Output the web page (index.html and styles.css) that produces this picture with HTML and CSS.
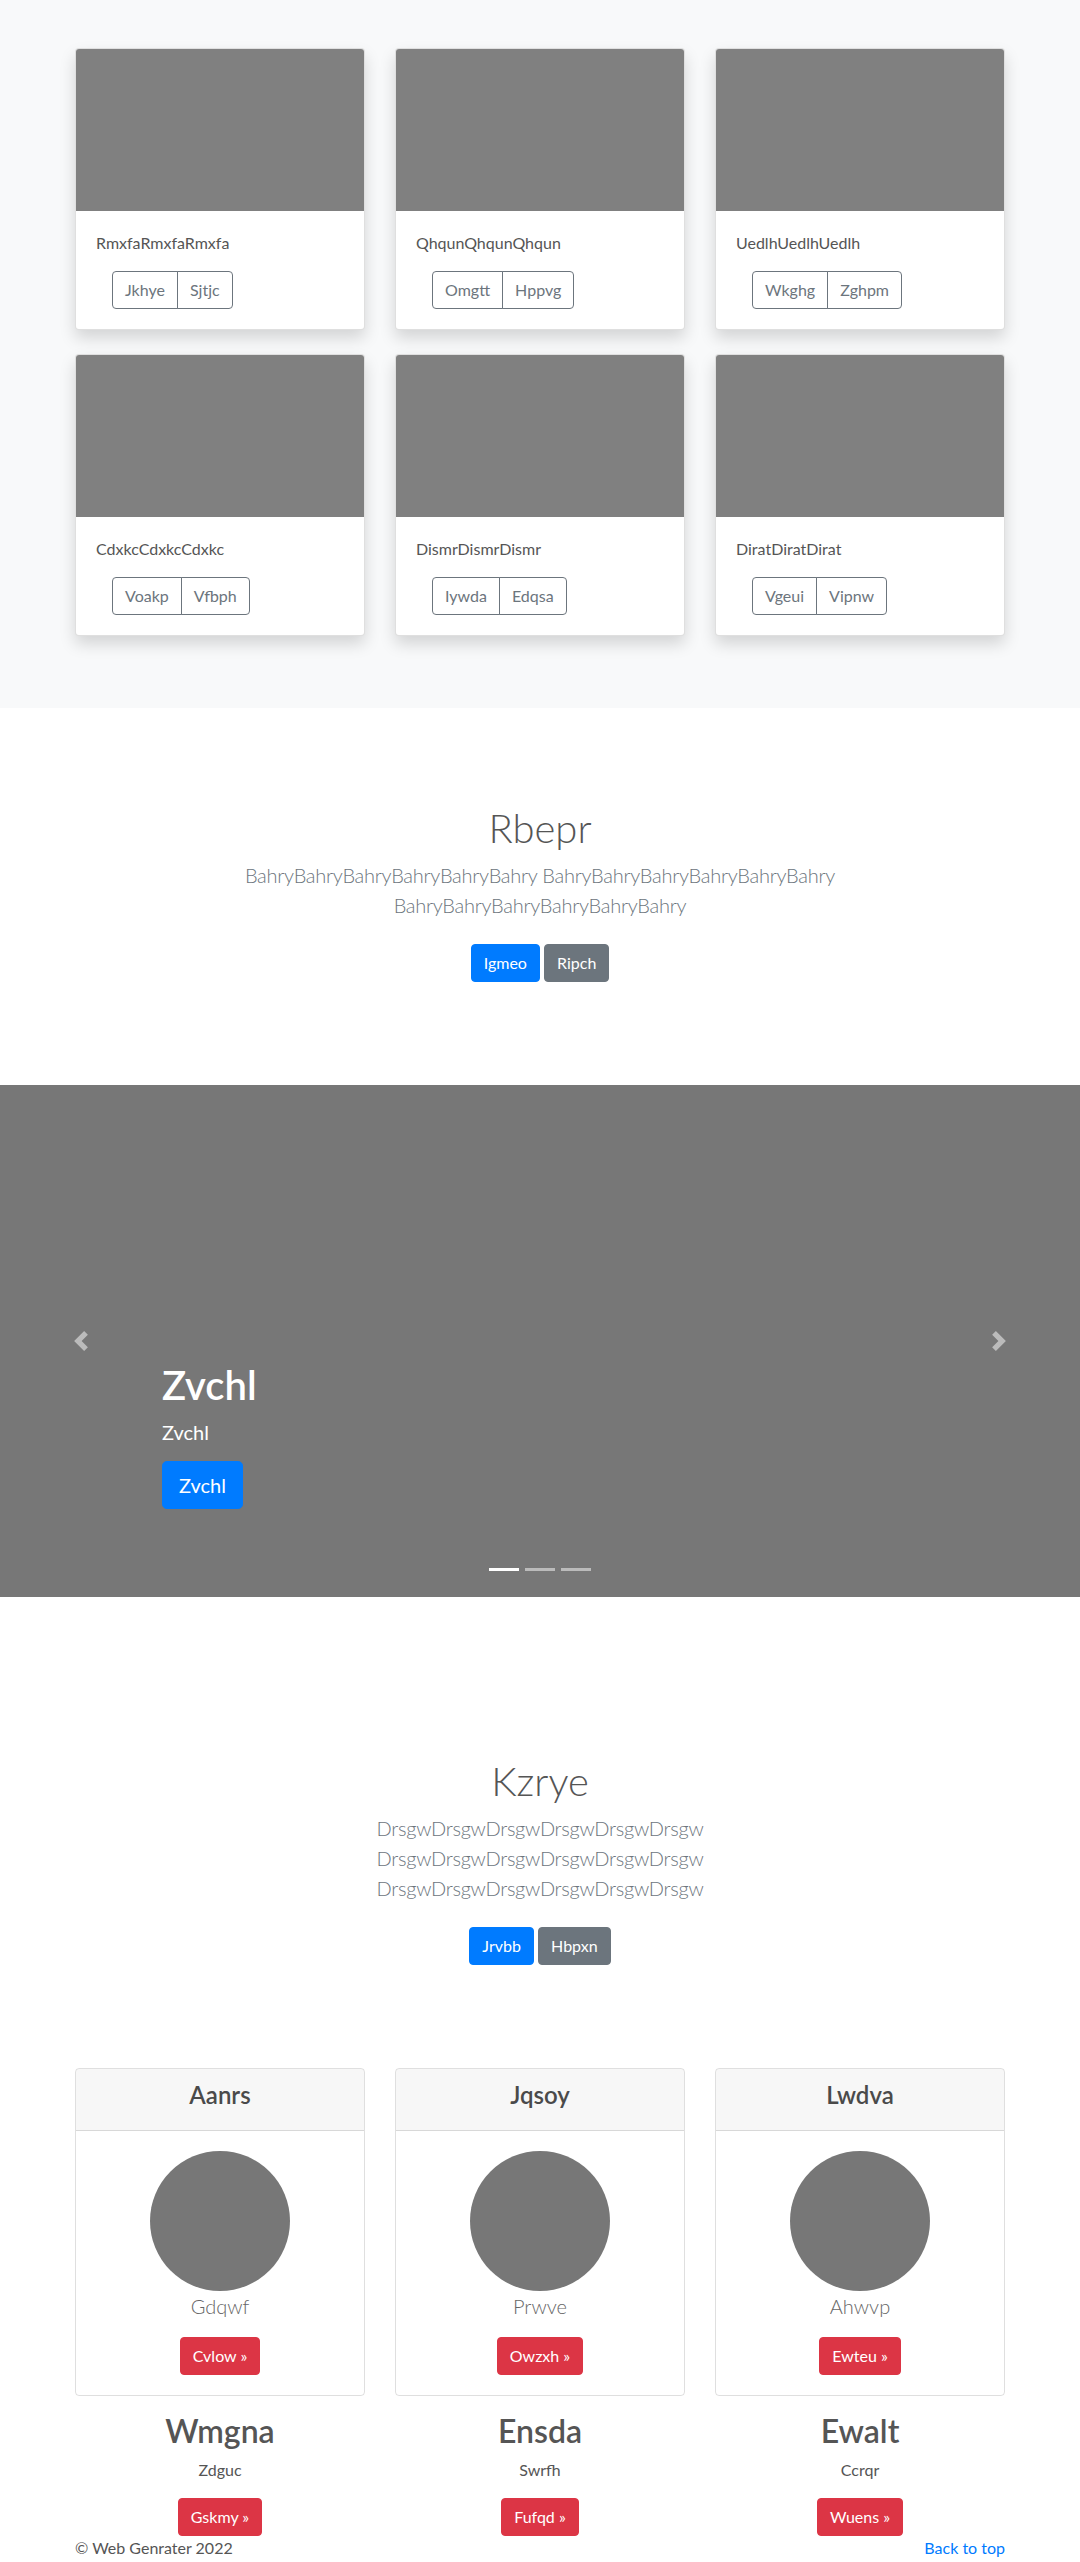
FILE: index.html
```html
<!DOCTYPE html>
<html lang="en">
<head>
<meta charset="utf-8">
<title>Album</title>
<link rel="stylesheet" href="styles.css">
</head>
<body>
<main>
  <section class="album">
    <div class="container">
      <div class="album-grid">
        <div class="card shadow">
          <div class="card-img"></div>
          <div class="card-body">
            <p class="card-text">RmxfaRmxfaRmxfa</p>
            <div class="btn-group"><a class="btn btn-outline">Jkhye</a><a class="btn btn-outline">Sjtjc</a></div>
          </div>
        </div>
        <div class="card shadow">
          <div class="card-img"></div>
          <div class="card-body">
            <p class="card-text">QhqunQhqunQhqun</p>
            <div class="btn-group"><a class="btn btn-outline">Omgtt</a><a class="btn btn-outline">Hppvg</a></div>
          </div>
        </div>
        <div class="card shadow">
          <div class="card-img"></div>
          <div class="card-body">
            <p class="card-text">UedlhUedlhUedlh</p>
            <div class="btn-group"><a class="btn btn-outline">Wkghg</a><a class="btn btn-outline">Zghpm</a></div>
          </div>
        </div>
        <div class="card shadow">
          <div class="card-img"></div>
          <div class="card-body">
            <p class="card-text">CdxkcCdxkcCdxkc</p>
            <div class="btn-group"><a class="btn btn-outline">Voakp</a><a class="btn btn-outline">Vfbph</a></div>
          </div>
        </div>
        <div class="card shadow">
          <div class="card-img"></div>
          <div class="card-body">
            <p class="card-text">DismrDismrDismr</p>
            <div class="btn-group"><a class="btn btn-outline">Iywda</a><a class="btn btn-outline">Edqsa</a></div>
          </div>
        </div>
        <div class="card shadow">
          <div class="card-img"></div>
          <div class="card-body">
            <p class="card-text">DiratDiratDirat</p>
            <div class="btn-group"><a class="btn btn-outline">Vgeui</a><a class="btn btn-outline">Vipnw</a></div>
          </div>
        </div>
      </div>
    </div>
  </section>

  <section class="jumbotron">
    <div class="narrow">
      <h1 class="jumbo-heading">Rbepr</h1>
      <p class="lead muted">BahryBahryBahryBahryBahryBahry BahryBahryBahryBahryBahryBahry BahryBahryBahryBahryBahryBahry</p>
      <p class="actions">
        <a class="btn btn-primary btn-spaced">Igmeo</a>
        <a class="btn btn-secondary btn-spaced">Ripch</a>
      </p>
    </div>
  </section>

  <div class="carousel">
    <ol class="indicators">
      <li class="active"></li>
      <li></li>
      <li></li>
    </ol>
    <div class="carousel-item">
      <div class="caption">
        <h1 class="caption-title">Zvchl</h1>
        <p class="caption-text">Zvchl</p>
        <p class="caption-actions"><a class="btn btn-lg btn-primary">Zvchl</a></p>
      </div>
    </div>
    <a class="control control-prev">
      <svg class="control-icon" viewBox="0 0 8 8" width="20" height="20"><path fill="#fff" d="M5.25 0l-4 4 4 4 1.5-1.5-2.5-2.5 2.5-2.5-1.5-1.5z"/></svg>
    </a>
    <a class="control control-next">
      <svg class="control-icon" viewBox="0 0 8 8" width="20" height="20"><path fill="#fff" d="M2.75 0l-1.5 1.5 2.5 2.5-2.5 2.5 1.5 1.5 4-4-4-4z"/></svg>
    </a>
  </div>

  <section class="jumbotron">
    <div class="narrow">
      <h1 class="jumbo-heading">Kzrye</h1>
      <p class="lead muted">DrsgwDrsgwDrsgwDrsgwDrsgwDrsgw DrsgwDrsgwDrsgwDrsgwDrsgwDrsgw DrsgwDrsgwDrsgwDrsgwDrsgwDrsgw</p>
      <p class="actions">
        <a class="btn btn-primary btn-spaced">Jrvbb</a>
        <a class="btn btn-secondary btn-spaced">Hbpxn</a>
      </p>
    </div>
  </section>

  <div class="container">
    <div class="deck">
      <div class="price-card">
        <div class="price-header"><h4 class="price-title">Aanrs</h4></div>
        <div class="price-body">
          <svg class="avatar" width="140" height="140" viewBox="0 0 140 140"><circle cx="70" cy="70" r="70" fill="#777"/></svg>
          <p class="price-name">Gdqwf</p>
          <a class="btn btn-danger">Cvlow &raquo;</a>
        </div>
      </div>
      <div class="price-card">
        <div class="price-header"><h4 class="price-title">Jqsoy</h4></div>
        <div class="price-body">
          <svg class="avatar" width="140" height="140" viewBox="0 0 140 140"><circle cx="70" cy="70" r="70" fill="#777"/></svg>
          <p class="price-name">Prwve</p>
          <a class="btn btn-danger">Owzxh &raquo;</a>
        </div>
      </div>
      <div class="price-card">
        <div class="price-header"><h4 class="price-title">Lwdva</h4></div>
        <div class="price-body">
          <svg class="avatar" width="140" height="140" viewBox="0 0 140 140"><circle cx="70" cy="70" r="70" fill="#777"/></svg>
          <p class="price-name">Ahwvp</p>
          <a class="btn btn-danger">Ewteu &raquo;</a>
        </div>
      </div>
    </div>

    <div class="marketing">
      <div class="feature">
        <h2 class="feature-title">Wmgna</h2>
        <p class="feature-text">Zdguc</p>
        <p class="feature-action"><a class="btn btn-danger">Gskmy &raquo;</a></p>
      </div>
      <div class="feature">
        <h2 class="feature-title">Ensda</h2>
        <p class="feature-text">Swrfh</p>
        <p class="feature-action"><a class="btn btn-danger">Fufqd &raquo;</a></p>
      </div>
      <div class="feature">
        <h2 class="feature-title">Ewalt</h2>
        <p class="feature-text">Ccrqr</p>
        <p class="feature-action"><a class="btn btn-danger">Wuens &raquo;</a></p>
      </div>
    </div>
  </div>
</main>

<footer class="container footer">
  <p class="back-top"><a class="link">Back to top</a></p>
  <p class="copyright">&copy; Web Genrater 2022</p>
</footer>
</body>
</html>
```

FILE: styles.css
```css
* { box-sizing: border-box; }

html, body {
  margin: 0;
  padding: 0;
}

body {
  font-family: Lato, "Open Sans", "Noto Sans", sans-serif;
  font-size: 16px;
  line-height: 1.5;
  color: #555;
  background: #fff;
}

p { margin: 0 0 16px; }
h1, h2, h4 { margin: 0 0 8px; line-height: 1.2; font-weight: 500; }

.container {
  width: 960px;
  margin: 0 auto;
  padding: 0 15px;
}

/* ---------- buttons ---------- */
.btn {
  display: inline-block;
  font-size: 16px;
  line-height: 24px;
  padding: 6px 12px;
  border: 1px solid transparent;
  border-radius: 4px;
  text-decoration: none;
  text-align: center;
  vertical-align: middle;
  cursor: pointer;
}
.btn-primary { background: #007bff; border-color: #007bff; color: #fff; }
.btn-secondary { background: #6c757d; border-color: #6c757d; color: #fff; }
.btn-danger { background: #dc3545; border-color: #dc3545; color: #fff; }
.btn-outline { background: transparent; border-color: #6c757d; color: #6c757d; }
.btn-lg {
  font-size: 20px;
  line-height: 30px;
  padding: 8px 16px;
  border-radius: 4.8px;
}
.btn-spaced { margin: 8px 0; }

.btn-group {
  display: inline-flex;
  margin-left: 16px;
}
.btn-group .btn:first-child { border-top-right-radius: 0; border-bottom-right-radius: 0; }
.btn-group .btn:last-child { border-top-left-radius: 0; border-bottom-left-radius: 0; margin-left: -1px; }

/* ---------- album ---------- */
.album {
  background: #f8f9fa;
  padding: 48px 0;
}
.album-grid {
  display: grid;
  grid-template-columns: repeat(3, 290px);
  column-gap: 30px;
}
.card {
  background: #fff;
  border: 1px solid rgba(0, 0, 0, 0.125);
  border-radius: 4px;
  margin-bottom: 24px;
  overflow: hidden;
}
.shadow { box-shadow: 0 8px 16px rgba(0, 0, 0, 0.15); }
.card-img {
  height: 162px;
  background: #808080;
}
.card-body { padding: 20px; }
.card-text { margin-bottom: 16px; }

/* ---------- jumbotron ---------- */
.jumbotron {
  padding: 96px 0 95px;
  text-align: center;
  background: #fff;
}
.narrow {
  max-width: 640px;
  margin: 0 auto;
  padding: 0 15px;
}
.jumbo-heading {
  font-size: 40px;
  font-weight: 300;
  color: #555;
}
.lead {
  font-size: 20px;
  font-weight: 300;
  line-height: 30px;
  letter-spacing: -0.25px;
}
.muted { color: #6c757d; }
.actions { margin: 0; }

/* ---------- carousel ---------- */
.carousel {
  position: relative;
  height: 512px;
  background: #777;
  margin-bottom: 64px;
  overflow: hidden;
}
.carousel-item { height: 512px; }
.caption {
  position: absolute;
  left: 15%;
  right: 15%;
  bottom: 52px;
  padding: 20px 0;
  color: #fff;
  text-align: left;
  z-index: 10;
}
.caption-title {
  font-size: 40px;
  font-weight: 600;
  color: #fff;
}
.caption-text {
  font-size: 20px;
  line-height: 30px;
  margin-bottom: 14px;
}
.caption-actions { margin-bottom: 16px; }

.control {
  position: absolute;
  top: 0;
  bottom: 0;
  width: 15%;
  display: flex;
  align-items: center;
  justify-content: center;
  opacity: 0.5;
  z-index: 5;
}
.control-prev { left: 0; }
.control-next { right: 0; }
.control-icon { display: block; width: 20px; height: 20px; }

.indicators {
  position: absolute;
  left: 0;
  right: 0;
  bottom: 0;
  margin: 0 0 16px;
  padding: 0;
  list-style: none;
  display: flex;
  justify-content: center;
  z-index: 15;
}
.indicators li {
  width: 30px;
  height: 3px;
  box-sizing: content-box;
  margin: 0 3px;
  border-top: 10px solid transparent;
  border-bottom: 10px solid transparent;
  background: #fff;
  background-clip: padding-box;
  opacity: 0.5;
}
.indicators li.active { opacity: 1; }

/* ---------- pricing deck ---------- */
.deck {
  display: grid;
  grid-template-columns: repeat(3, 290px);
  column-gap: 30px;
}
.price-card {
  border: 1px solid rgba(0, 0, 0, 0.125);
  border-radius: 4px;
  text-align: center;
  margin-bottom: 16px;
  overflow: hidden;
}
.price-header {
  background: rgba(0, 0, 0, 0.03);
  border-bottom: 1px solid rgba(0, 0, 0, 0.125);
  padding: 12px 20px;
}
.price-title {
  font-size: 24px;
  font-weight: 600;
  color: #4a4a4a;
}
.price-body { padding: 20px; }
.avatar { display: block; margin: 0 auto; }
.price-name {
  font-size: 20px;
  font-weight: 300;
  line-height: 30px;
  color: #666;
  margin-bottom: 16px;
}

/* ---------- marketing ---------- */
.marketing {
  display: grid;
  grid-template-columns: repeat(3, 290px);
  column-gap: 30px;
  text-align: center;
}
.feature-title {
  font-size: 32px;
  font-weight: 600;
  color: #555;
}
.feature-text { margin-bottom: 16px; }
.feature-action { margin: 0; }

/* ---------- footer ---------- */
.footer { overflow: hidden; }
.footer p { margin: 0; }
.back-top { float: right; }
.link { color: #007bff; text-decoration: none; }
```
